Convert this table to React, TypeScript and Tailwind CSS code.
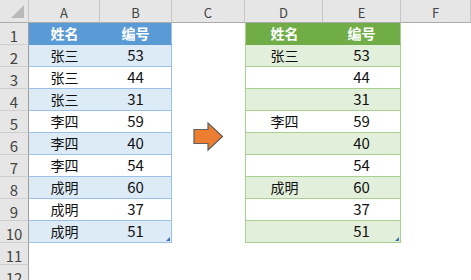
import React from "react"

const names = ["张三", "张三", "张三", "李四", "李四", "李四", "成明", "成明", "成明"]
const nums = ["53", "44", "31", "59", "40", "54", "60", "37", "51"]

const cellFont = { fontFamily: '"Noto Sans CJK SC", "Noto Sans", sans-serif' }
const hdrFont = { fontFamily: '"Noto Sans CJK SC", "Noto Sans", sans-serif' }

function ColHeader({ label, corner }: { label?: string; corner?: boolean }) {
  return (
    <div className="relative flex items-end justify-center border-r border-b border-r-[#c6c6c6] border-b-[#ababab] bg-[#e6e6e6] pb-[1px] text-[13px] leading-none text-[#444]" style={hdrFont}>
      {corner ? (
        <svg className="absolute right-[4px] bottom-[4px]" width="13" height="13" viewBox="0 0 13 13">
          <polygon points="13,0 13,13 0,13" fill="#b9b9b9" />
        </svg>
      ) : (
        <span className="pb-[2px]">{label}</span>
      )}
    </div>
  )
}

function RowHeader({ n }: { n: number }) {
  return (
    <div className="flex items-end justify-center border-r border-b border-r-[#9e9e9e] border-b-[#cfcfcf] bg-[#e6e6e6] text-[15px] leading-none text-[#444]" style={hdrFont}>
      <span className="pb-[1px]">{n}</span>
    </div>
  )
}

function Handle() {
  return (
    <svg className="absolute right-[1px] bottom-[1px]" width="4" height="4" viewBox="0 0 4 4">
      <polygon points="4,0 4,4 0,4" fill="#3d6cb0" />
    </svg>
  )
}

export default function App() {
  const rows = Array.from({ length: 12 }, (_, i) => i + 1)
  return (
    <div className="h-[280px] w-[471px] overflow-hidden bg-white">
      <div className="grid grid-cols-[29px_71px_72px_73px_78px_78px_70px] grid-rows-[23px_repeat(12,22px)]">
        <ColHeader corner />
        <ColHeader label="A" />
        <ColHeader label="B" />
        <ColHeader label="C" />
        <ColHeader label="D" />
        <ColHeader label="E" />
        <ColHeader label="F" />

        {rows.map((r) => {
          const isHead = r === 1
          const inTable = r <= 10
          const striped = r % 2 === 0
          const blueBg = isHead ? "bg-[#5b9bd5] text-white font-bold border-b-[#5b9bd5]" : striped ? "bg-[#ddebf7] border-b-[#9bc2e6]" : "bg-white border-b-[#9bc2e6]"
          const greenBg = isHead ? "bg-[#70ad47] text-white font-bold border-b-[#70ad47]" : striped ? "bg-[#e2efda] border-b-[#a9d08e]" : "bg-white border-b-[#a9d08e]"
          const numSize = isHead ? "text-[14px]" : "text-[15px]"
          const a = isHead ? "姓名" : names[r - 2]
          const b = isHead ? "编号" : nums[r - 2]
          const d = isHead ? "姓名" : (r - 2) % 3 === 0 ? names[r - 2] : ""
          return (
            <React.Fragment key={r}>
              <RowHeader n={r} />
              {inTable ? (
                <>
                  <div className={`flex items-center justify-center border-b text-[14px] text-[#111] ${blueBg}`} style={cellFont}>{a}</div>
                  <div className={`relative flex items-center justify-center border-r border-b border-r-[#9bc2e6] text-[#111] ${numSize} ${blueBg}`} style={cellFont}>
                    {b}
                    {r === 10 && <Handle />}
                  </div>
                </>
              ) : (
                <>
                  <div className="bg-white" />
                  <div className="bg-white" />
                </>
              )}
              {r === 1 && (
                <div className="row-span-12 bg-white pt-[99px] pl-[21px]">
                  <svg width="31" height="30" viewBox="0 0 31 30">
                    <polygon points="1,7.5 15,7.5 15,1 29.5,14.5 15,28 15,21.5 1,21.5" fill="#ed7d31" stroke="#5f5f5f" strokeWidth="1.2" strokeLinejoin="miter" />
                  </svg>
                </div>
              )}
              {inTable ? (
                <>
                  <div className={`flex items-center justify-center border-l border-b border-l-[#a9d08e] text-[14px] text-[#111] ${greenBg}`} style={cellFont}>{d}</div>
                  <div className={`relative flex items-center justify-center border-r border-b border-r-[#a9d08e] text-[#111] ${numSize} ${greenBg}`} style={cellFont}>
                    {b}
                    {r === 10 && <Handle />}
                  </div>
                </>
              ) : (
                <>
                  <div className="bg-white" />
                  <div className="bg-white" />
                </>
              )}
              {r === 1 && <div className="row-span-12 bg-white" />}
            </React.Fragment>
          )
        })}
      </div>
    </div>
  )
}
